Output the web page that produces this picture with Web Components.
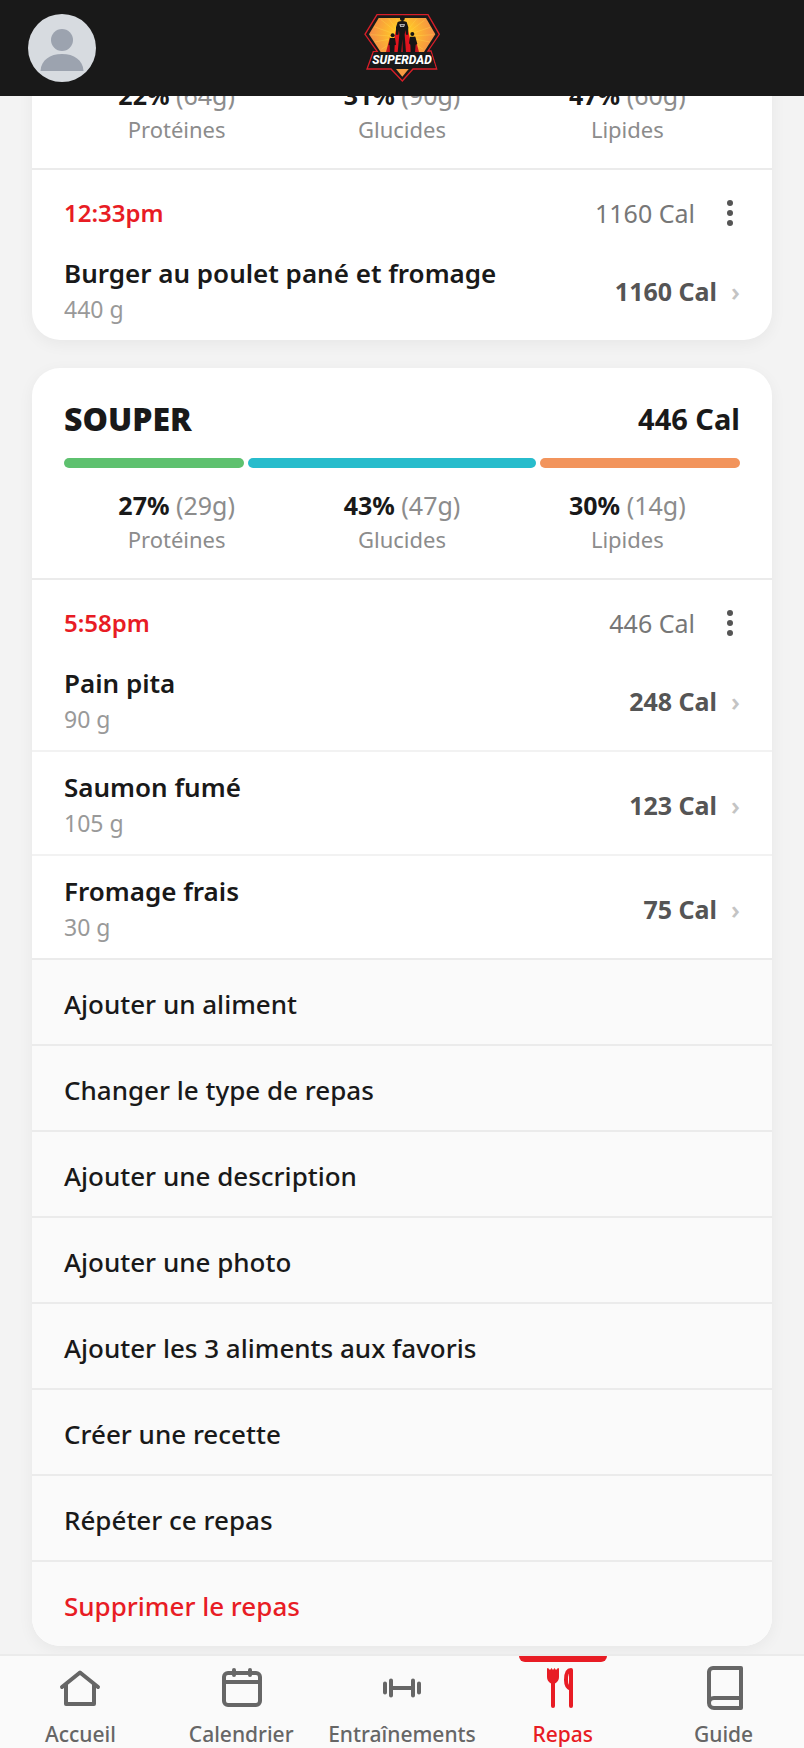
<!DOCTYPE html>
<html lang="fr">
<head>
<meta charset="utf-8">
<meta name="viewport" content="width=device-width, initial-scale=1">
<title>Repas</title>
<style>
  :root {
    --red: #e81c24;
    --ink: #191919;
    --line: #ebebeb;
    --panel: #fafafa;
  }
  body {
    margin: 0;
    background: #f3f3f3;
    color: var(--ink);
    font-family: "Noto Sans", "Open Sans", sans-serif;
    font-size: 26px;
    line-height: 36px;
  }
  food-row:has(+ meal-action) {
    border-bottom-color: var(--line);
  }
</style>
</head>
<body>
<app-shell>
  <app-header slot="header"></app-header>

  <meal-card>
    <macro-summary protein="22" protein-g="64" carbs="31" carbs-g="90" fat="47" fat-g="60"></macro-summary>
    <meal-time time="12:33pm" cal="1160"></meal-time>
    <food-row name="Burger au poulet pané et fromage" weight="440" cal="1160"></food-row>
  </meal-card>

  <meal-card name="Souper" cal="446">
    <macro-summary protein="27" protein-g="29" carbs="43" carbs-g="47" fat="30" fat-g="14"></macro-summary>
    <meal-time time="5:58pm" cal="446"></meal-time>
    <food-row name="Pain pita" weight="90" cal="248"></food-row>
    <food-row name="Saumon fumé" weight="105" cal="123"></food-row>
    <food-row name="Fromage frais" weight="30" cal="75"></food-row>
    <meal-action>Ajouter un aliment</meal-action>
    <meal-action>Changer le type de repas</meal-action>
    <meal-action>Ajouter une description</meal-action>
    <meal-action>Ajouter une photo</meal-action>
    <meal-action>Ajouter les 3 aliments aux favoris</meal-action>
    <meal-action>Créer une recette</meal-action>
    <meal-action>Répéter ce repas</meal-action>
    <meal-action danger>Supprimer le repas</meal-action>
  </meal-card>

  <tab-bar slot="footer">
    <tab-item icon="home">Accueil</tab-item>
    <tab-item icon="calendar">Calendrier</tab-item>
    <tab-item icon="dumbbell">Entraînements</tab-item>
    <tab-item icon="meal" active>Repas</tab-item>
    <tab-item icon="book">Guide</tab-item>
  </tab-bar>
</app-shell>

<script>
class AppShell extends HTMLElement {
  constructor() {
    super();
    this.attachShadow({ mode: "open" }).innerHTML = `
      <style>
        :host {
          display: flex;
          flex-direction: column;
          height: 100vh;
        }
        main {
          flex: 1;
          min-height: 0;
          overflow-y: auto;
          scrollbar-width: none;
        }
        .list {
          display: flex;
          flex-direction: column;
          gap: 28px;
          padding: 32px 32px 8px;
        }
      </style>
      <slot name="header"></slot>
      <main><div class="list"><slot></slot></div></main>
      <slot name="footer"></slot>`;
  }

  scrollToEnd() {
    const main = this.shadowRoot.querySelector("main");
    main.scrollTop = main.scrollHeight;
  }
}

class AppHeader extends HTMLElement {
  constructor() {
    super();
    this.attachShadow({ mode: "open" }).innerHTML = `
      <style>
        :host {
          display: block;
          background: var(--ink);
        }
        header {
          display: grid;
          grid-template-columns: 1fr auto 1fr;
          align-items: center;
          padding: 12px 28px;
        }
        button {
          width: 68px;
          height: 68px;
          padding: 0;
          border: 0;
          border-radius: 50%;
          overflow: hidden;
          background: #d7dbe0;
        }
        svg {
          display: block;
        }
      </style>
      <header>
        <button type="button" aria-label="Profil">
          <svg width="68" height="68" viewBox="0 0 68 68" fill="#9ca3af">
            <circle cx="34" cy="26" r="11" />
            <path d="M12.5 57C13 46 22 40 34 40s21 6 21.500 17z" />
          </svg>
        </button>
        <svg width="77" height="72" viewBox="42 36 231 216" role="img" aria-label="Superdad">
          <defs>
            <radialGradient id="sun" cx="157" cy="100" r="95" gradientUnits="userSpaceOnUse">
              <stop offset="0" stop-color="#ffdc1e" />
              <stop offset=".45" stop-color="#fdb92e" />
              <stop offset="1" stop-color="#f58f45" />
            </radialGradient>
          </defs>
          <path d="M81 44H234L268 103 234 153H243L260 207H189L157 243 123 207H51L70 155H82L45 103Z" fill="#191919" stroke="#d81e28" stroke-width="4" />
          <path d="M86 54H228L256 103 222 156H92L57 103Z" fill="url(#sun)" />
          <g stroke="#ffd64a" stroke-width="2" opacity=".6">
            <path d="M157 110 92 58M157 110 116 56M157 110 140 56M157 110 176 56M157 110 200 56M157 110 224 60M157 110 240 82M157 110 250 104M157 110 240 126M157 110 72 80M157 110 62 104M157 110 74 126M157 110 94 148M157 110 220 148" />
          </g>
          <path d="M143 74C134 92 134 126 124 146L120 158H196L186 140C180 122 176 92 170 74Z" fill="#e0141e" />
          <path d="M120 110 108 156H124ZM194 108 207 156H180Z" fill="#c8141e" />
          <g fill="#151515">
            <ellipse cx="157" cy="55" rx="7" ry="8" />
            <path d="M143 66Q157 60 170 66L175 82 174 104H168L166 90 164 104 168 157H158L157 118 154 157H143L148 104 147 90 145 104H138L138 82Z" />
            <circle cx="128" cy="106" r="6" />
            <path d="M120 114H135L138 134 134 136 133 157H120L119 136 116 134Z" />
            <circle cx="187" cy="102" r="6" />
            <path d="M180 110H196L202 132 197 134 195 157H182L181 134 177 130Z" />
          </g>
          <path d="M148 73H165L162 81H151Z" fill="#ddd" />
          <path d="M152 75H161V79H152Z" fill="#444" />
          <path d="M72 156H242L257 203H57Z" fill="#191919" />
          <text x="156" y="193" text-anchor="middle" fill="#fff" font-family="Roboto, 'Liberation Sans', sans-serif" font-size="36" font-weight="800" font-style="italic">SUPERDAD</text>
          <path d="M138 207H176L157 230Z" fill="#f79c42" />
        </svg>
      </header>`;
  }
}

class MealCard extends HTMLElement {
  constructor() {
    super();
    this.attachShadow({ mode: "open" }).innerHTML = `
      <style>
        :host {
          display: block;
          flex: none;
          border-radius: 28px;
          background: #fff;
          box-shadow: 0 4px 16px rgba(0, 0, 0, 0.05);
        }
        section {
          border-radius: inherit;
          overflow: hidden;
        }
        .head {
          display: flex;
          justify-content: space-between;
          padding: 33px 32px 0;
        }
        .head[hidden] {
          display: none;
        }
        h2 {
          margin: 0;
          font-size: 32px;
          line-height: 36px;
          font-weight: 900;
          text-transform: uppercase;
        }
        .total {
          font-size: 29px;
          font-weight: 700;
        }
      </style>
      <section>
        <div class="head" hidden>
          <h2></h2>
          <span class="total"></span>
        </div>
        <slot></slot>
      </section>`;
  }
  connectedCallback() {
    const name = this.getAttribute("name");
    if (!name) return;
    this.shadowRoot.querySelector(".head").hidden = false;
    this.shadowRoot.querySelector("h2").textContent = name;
    this.shadowRoot.querySelector(".total").textContent =
      this.getAttribute("cal") + " Cal";
  }
}

const macros = [
  { key: "protein", label: "Protéines", color: "#5ec16f" },
  { key: "carbs", label: "Glucides", color: "#27bccc" },
  { key: "fat", label: "Lipides", color: "#f2945c" },
];

class MacroSummary extends HTMLElement {
  constructor() {
    super();
    this.attachShadow({ mode: "open" }).innerHTML = `
      <style>
        :host {
          display: block;
          padding: 21px 32px 23px;
          border-bottom: 2px solid var(--line);
        }
        .bar {
          display: flex;
          gap: 4px;
          height: 10px;
        }
        .bar div {
          border-radius: 5px;
        }
        .macros {
          display: grid;
          grid-template-columns: repeat(3, 1fr);
          margin-top: 19px;
          text-align: center;
          font-size: 25px;
          color: #8c8c8c;
        }
        b {
          color: var(--ink);
        }
        .label {
          font-size: 22px;
          line-height: 32px;
        }
      </style>
      <div class="bar"></div>
      <div class="macros"></div>`;
  }
  connectedCallback() {
    const bar = this.shadowRoot.querySelector(".bar");
    const list = this.shadowRoot.querySelector(".macros");
    macros.forEach((m) => {
      const pct = this.getAttribute(m.key);
      const part = document.createElement("div");
      part.style.flex = `${pct} 0 0`;
      part.style.background = m.color;
      bar.appendChild(part);

      const cell = document.createElement("div");
      cell.innerHTML = `
        <div><b>${pct}%</b> (${this.getAttribute(m.key + "-g")}g)</div>
        <div class="label">${m.label}</div>`;
      list.appendChild(cell);
    });
  }
}

class MealTime extends HTMLElement {
  constructor() {
    super();
    this.attachShadow({ mode: "open" }).innerHTML = `
      <style>
        :host {
          display: flex;
          align-items: center;
          padding: 25px 32px 7px;
        }
        time {
          flex: 1;
          color: var(--red);
          font-size: 24px;
          font-weight: 600;
        }
        .cal {
          color: #777;
          font-size: 25px;
        }
        button {
          margin-left: 25px;
          padding: 0;
          border: 0;
          background: none;
        }
        svg {
          display: block;
        }
      </style>
      <time></time>
      <span class="cal"></span>
      <button type="button" aria-label="Options">
        <svg width="20" height="32" viewBox="0 0 20 32" fill="#555">
          <circle cx="10" cy="6" r="3" />
          <circle cx="10" cy="16" r="3" />
          <circle cx="10" cy="26" r="3" />
        </svg>
      </button>`;
  }
  connectedCallback() {
    this.shadowRoot.querySelector("time").textContent = this.getAttribute("time");
    this.shadowRoot.querySelector(".cal").textContent =
      this.getAttribute("cal") + " Cal";
  }
}

class FoodRow extends HTMLElement {
  constructor() {
    super();
    this.attachShadow({ mode: "open" }).innerHTML = `
      <style>
        :host {
          display: block;
        }
        :host(:not(:last-child)) {
          border-bottom: 2px solid #f2f2f2;
        }
        button {
          display: flex;
          align-items: center;
          width: 100%;
          padding: 17px 32px 13px;
          border: 0;
          background: none;
          color: inherit;
          font: inherit;
          text-align: left;
        }
        .food {
          flex: 1;
        }
        .name {
          font-weight: 600;
        }
        .weight {
          color: #999;
          font-size: 23px;
        }
        .cal {
          color: #555;
          font-size: 25px;
          font-weight: 700;
        }
        .chevron {
          margin-left: 14px;
          color: #c4c4c4;
          font-weight: 600;
        }
      </style>
      <button type="button">
        <div class="food">
          <div class="name"></div>
          <div class="weight"></div>
        </div>
        <span class="cal"></span>
        <span class="chevron">›</span>
      </button>`;
  }
  connectedCallback() {
    this.shadowRoot.querySelector(".name").textContent = this.getAttribute("name");
    this.shadowRoot.querySelector(".weight").textContent =
      this.getAttribute("weight") + " g";
    this.shadowRoot.querySelector(".cal").textContent =
      this.getAttribute("cal") + " Cal";
  }
}

class MealAction extends HTMLElement {
  constructor() {
    super();
    this.attachShadow({ mode: "open" }).innerHTML = `
      <style>
        :host {
          display: block;
          background: var(--panel);
        }
        :host(:not(:last-child)) {
          border-bottom: 2px solid var(--line);
        }
        button {
          display: block;
          width: 100%;
          padding: 26px 32px 22px;
          border: 0;
          background: none;
          color: inherit;
          font: inherit;
          font-weight: 500;
          text-align: left;
        }
        :host([danger]) button {
          color: var(--red);
        }
      </style>
      <button type="button"><slot></slot></button>`;
  }
}

class TabBar extends HTMLElement {
  constructor() {
    super();
    this.attachShadow({ mode: "open" }).innerHTML = `
      <style>
        :host {
          display: block;
          border-top: 2px solid var(--line);
          background: var(--panel);
        }
        nav {
          display: grid;
          grid-template-columns: repeat(5, 1fr);
        }
      </style>
      <nav><slot></slot></nav>`;
  }
}

const icons = {
  home: `<path d="M6 23 24 8.500 42 23M10 21V40H38V21" />`,
  calendar: `<rect x="7" y="9" width="36" height="32" rx="4" /><path d="M7 18H43M17 6v5M33 6v5" />`,
  dumbbell: `<path d="M7 19.500v9M13 16.500v15M13 24H35M35 16.500v15M41 19.500v9" />`,
  meal: `<path d="M14 18V42M32 6V42M32 6C28 6 27 11 27 16s2 8 5 9" />
    <path d="M8 5Q8 4 9 4L11 6 12.500 4 14 6 15.500 4 17 6 19 4Q20 4 20 5V13Q20 17 16 19.500H12Q8 17 8 13Z" fill="currentColor" stroke="none" />`,
  book: `<path d="M9 39V8a4 4 0 0 1 4-4H41V44H14a5 5 0 0 1 0-10H41" />`,
};

class TabItem extends HTMLElement {
  constructor() {
    super();
    this.attachShadow({ mode: "open" }).innerHTML = `
      <style>
        :host {
          display: block;
          color: #666;
        }
        :host([active]) {
          color: var(--red);
        }
        a {
          position: relative;
          display: flex;
          flex-direction: column;
          align-items: center;
          gap: 8px;
          padding-top: 8px;
          color: inherit;
          font-size: 21px;
          line-height: 28px;
          font-weight: 500;
          text-decoration: none;
        }
        :host([active]) a::before {
          content: "";
          position: absolute;
          top: 0;
          width: 88px;
          height: 6px;
          border-radius: 0 0 6px 6px;
          background: var(--red);
        }
      </style>
      <a href="#">
        <svg width="48" height="48" viewBox="0 0 48 48" fill="none" stroke="currentColor" stroke-width="4" stroke-linecap="round" stroke-linejoin="round"></svg>
        <span><slot></slot></span>
      </a>`;
  }
  connectedCallback() {
    this.shadowRoot.querySelector("svg").innerHTML = icons[this.getAttribute("icon")];
  }
}

customElements.define("app-shell", AppShell);
customElements.define("app-header", AppHeader);
customElements.define("meal-card", MealCard);
customElements.define("macro-summary", MacroSummary);
customElements.define("meal-time", MealTime);
customElements.define("food-row", FoodRow);
customElements.define("meal-action", MealAction);
customElements.define("tab-bar", TabBar);
customElements.define("tab-item", TabItem);

// start at the latest meal of the day
document.querySelector("app-shell").scrollToEnd();
</script>
</body>
</html>
